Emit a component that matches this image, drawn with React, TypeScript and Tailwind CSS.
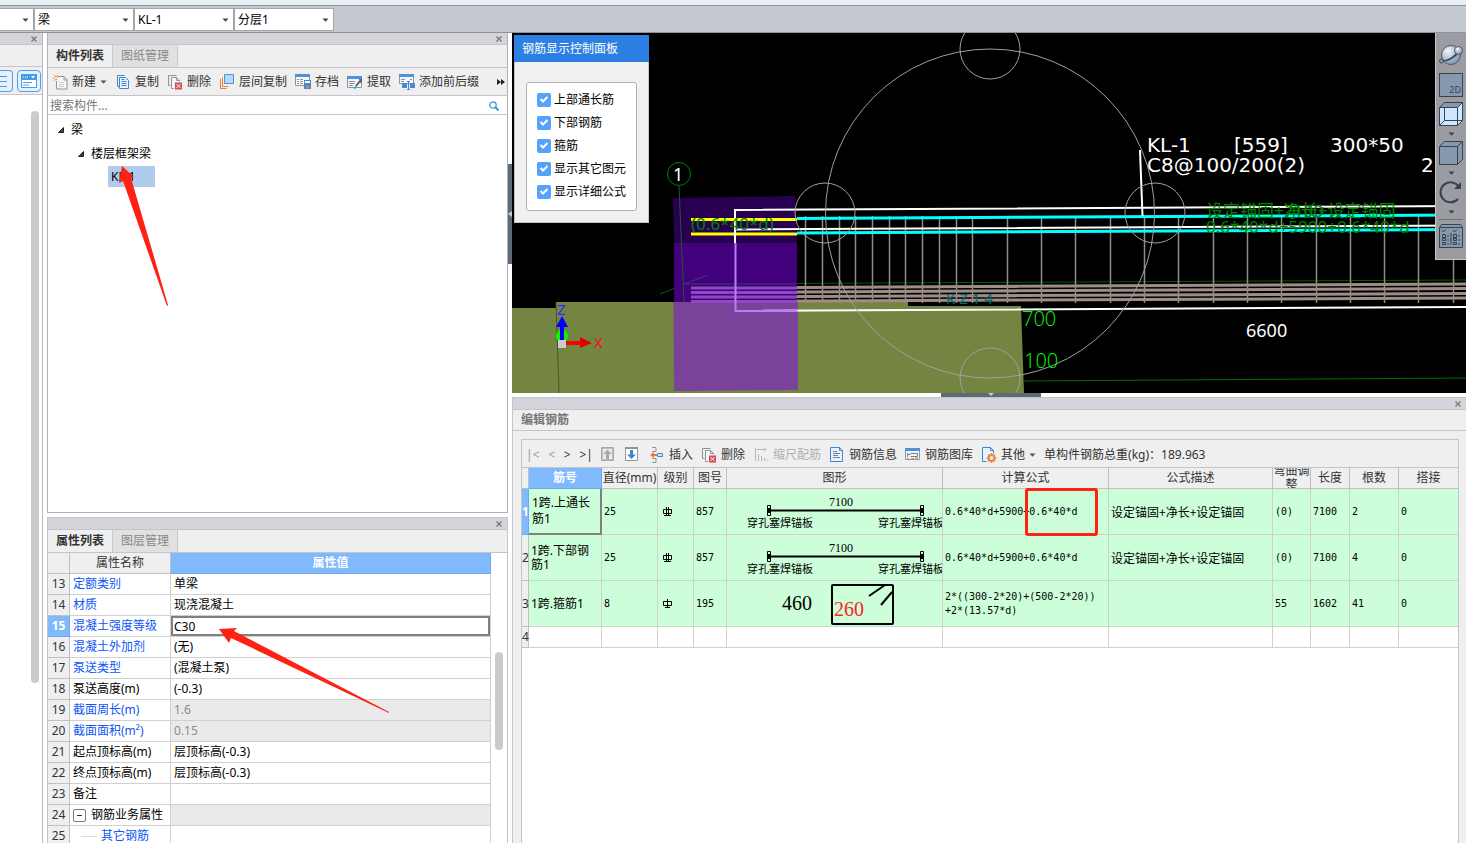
import type { ReactNode } from "react";

const sansFont = "font-['Noto_Sans','Noto_Sans_CJK_SC',sans-serif]";
const monoFont = "font-['DejaVu_Sans_Mono','Noto_Sans_CJK_SC',monospace]";

const filters = ["梁", "KL-1", "分层1"];

type PropertyRow = {
  no: number;
  name: string;
  value: string;
  link?: boolean;
  readOnly?: boolean;
  kind?: "group" | "child" | "active";
};

const properties: PropertyRow[] = [
  { no: 13, name: "定额类别", value: "单梁", link: true },
  { no: 14, name: "材质", value: "现浇混凝土", link: true },
  { no: 15, name: "混凝土强度等级", value: "C30", link: true, kind: "active" },
  { no: 16, name: "混凝土外加剂", value: "(无)", link: true },
  { no: 17, name: "泵送类型", value: "(混凝土泵)", link: true },
  { no: 18, name: "泵送高度(m)", value: "(-0.3)" },
  { no: 19, name: "截面周长(m)", value: "1.6", link: true, readOnly: true },
  { no: 20, name: "截面面积(m²)", value: "0.15", link: true, readOnly: true },
  { no: 21, name: "起点顶标高(m)", value: "层顶标高(-0.3)" },
  { no: 22, name: "终点顶标高(m)", value: "层顶标高(-0.3)" },
  { no: 23, name: "备注", value: "" },
  { no: 24, name: "钢筋业务属性", value: "", readOnly: true, kind: "group" },
  { no: 25, name: "其它钢筋", value: "", link: true, kind: "child" },
];

const displayOptions = ["上部通长筋", "下部钢筋", "箍筋", "显示其它图元", "显示详细公式"];

const rebarColumns = [
  { label: "直径(mm)", width: "w-[56px]" },
  { label: "级别", width: "w-[36px]" },
  { label: "图号", width: "w-[33px]" },
  { label: "图形", width: "w-[216px]" },
  { label: "计算公式", width: "w-[166px]" },
  { label: "公式描述", width: "w-[164px]" },
  { label: "弯曲调整", width: "w-[38px]" },
  { label: "长度", width: "w-[39px]" },
  { label: "根数", width: "w-[49px]" },
  { label: "搭接", width: "" },
];

const rebars = [
  {
    no: 1,
    name: "1跨.上通长筋1",
    diameter: "25",
    shapeNo: "857",
    formula: ["0.6*40*d+5900+0.6*40*d"],
    description: "设定锚固+净长+设定锚固",
    bend: "(0)",
    length: "7100",
    count: "2",
    lap: "0",
  },
  {
    no: 2,
    name: "1跨.下部钢筋1",
    diameter: "25",
    shapeNo: "857",
    formula: ["0.6*40*d+5900+0.6*40*d"],
    description: "设定锚固+净长+设定锚固",
    bend: "(0)",
    length: "7100",
    count: "4",
    lap: "0",
  },
  {
    no: 3,
    name: "1跨.箍筋1",
    diameter: "8",
    shapeNo: "195",
    formula: ["2*((300-2*20)+(500-2*20))", "+2*(13.57*d)"],
    description: "",
    bend: "55",
    length: "1602",
    count: "41",
    lap: "0",
  },
];

const stirrups = [
  805, 822, 839, 855, 872, 889, 905, 922, 939, 956, 972, 1007, 1041, 1075, 1110, 1144, 1178,
  1213, 1247, 1281, 1316, 1350, 1384, 1418, 1453,
];

function Icon({ children }: { children: ReactNode }) {
  return (
    <svg viewBox="0 0 16 16" className="w-4 h-4 shrink-0" fill="none" aria-hidden="true">
      {children}
    </svg>
  );
}

function Caret({ className = "" }: { className?: string }) {
  return (
    <svg viewBox="0 0 7 4" className={`w-[7px] h-1 shrink-0 ${className}`} aria-hidden="true">
      <path d="M0.5 0.5h6L3.5 3.7z" fill="currentColor" />
    </svg>
  );
}

const NewIcon = () => (
  <Icon>
    <path d="M6 2.500h6l3 3v9.500H4.500V7" fill="#f6f6f6" stroke="#8c969e" />
    <path d="M12 2.500v3.500h3" stroke="#8c969e" />
    <path d="M7 8.500h5M7 10.500h5M7 12.500h5" stroke="#c9cdd1" />
    <path d="M2 1.500h1M5 1.500h1M3 2.500h2M2 3.500h1M5 3.500h1M1 4.500h1M3 5.500h2M2 6.500h1" stroke="#e79b2e" />
  </Icon>
);

const CopyIcon = () => (
  <Icon>
    <path d="M4.500 12.500h-2v-11h7" stroke="#3f86d2" />
    <path d="M4.500 3.500h6l3 3v8h-9z" fill="#e9f3fd" stroke="#3f86d2" />
    <path d="M6.500 7.500h5M6.500 9.500h5M6.500 11.500h5M6.500 5.500h3" stroke="#3f86d2" />
  </Icon>
);

const DeleteIcon = () => (
  <Icon>
    <path d="M3.500 11.500h-2v-10h8" stroke="#8c969e" />
    <path d="M7 14.500H4.500v-11h5l3 3v1" fill="#f6f6f6" stroke="#8c969e" />
    <path d="M9.500 3.500v3h3" stroke="#8c969e" />
    <path d="M8 8.500h7v7H8z" fill="#d64b50" />
    <path d="M9.500 10l4 4M13.500 10l-4 4" stroke="#fff" />
  </Icon>
);

const LayerCopyIcon = () => (
  <Icon>
    <path d="M1.500 5v9.500h6M3.500 3.500v9h6" stroke="#ee8132" />
    <path d="M5.500 0.500h9v9h-9z" fill="#b8d8fb" stroke="#4d92dd" />
  </Icon>
);

const ArchiveIcon = () => (
  <Icon>
    <path d="M0.500 0.500h14v11H0.500z" fill="#f4f6f8" stroke="#8c969e" />
    <path d="M0 0h15v3H0z" fill="#4d92dd" />
    <path d="M2 5.500h2M5 5.500h3M2 7.500h2M5 7.500h3M2 9.500h2M5 9.500h3" stroke="#8c969e" />
    <path d="M9 6h7v9H9z" fill="#4888d5" />
    <path d="M10 7h5v2h-5z" fill="#fff" />
    <path d="M11 12h3v2h-3z" fill="#ee8132" />
  </Icon>
);

const ExtractIcon = () => (
  <Icon>
    <path d="M0.500 2.500h14v11H0.500z" fill="#f4f6f8" stroke="#8c969e" />
    <path d="M0 2h15v3H0z" fill="#4d92dd" />
    <path d="M2 7.500h6M2 9.500h6M2 11.500h4" stroke="#8c969e" />
    <path d="M9 12l4-5" stroke="#59636d" strokeWidth="2" />
    <path d="M12 5h3v3l-2 1z" fill="#59636d" />
    <path d="M7 14.500l2.500-2" stroke="#22b4c4" strokeWidth="2" />
  </Icon>
);

const PrefixIcon = () => (
  <Icon>
    <path d="M0.500 0.500h14v9H0.500z" fill="#f4f6f8" stroke="#8c969e" />
    <path d="M0 0h15v3H0z" fill="#4d92dd" />
    <path d="M2 5.500h4M2 7.500h3M11 5.500h2" stroke="#8c969e" />
    <path d="M3 9h5v5H3zM11 9h5v5h-5z" fill="#4888d5" />
    <path d="M8 7.500h3M9.500 7.500v8M8 15.500h3" stroke="#4888d5" />
  </Icon>
);

const InsertIcon = () => (
  <Icon>
    <path d="M3 0.500h4v4H3M3 15.500h4v-4H3" stroke="#8c969e" />
    <path d="M1 8l4-3v2h3v2H5v2z" fill="#f07a2c" />
    <path d="M8.500 6.500h5v3h-5z" fill="#cfe3f9" stroke="#4888d5" />
  </Icon>
);

const ScaleIcon = () => (
  <Icon>
    <path d="M2.500 1v13M4 2.500h9M11 0.500l2 2-2 2M5.500 7v7M8.500 9v5M11.500 11v3M14 12.500v1.500" stroke="#b4b7ba" />
  </Icon>
);

const InfoIcon = () => (
  <Icon>
    <path d="M1.500 0.500h9l3 3v11h-12z" fill="#e9f3fd" stroke="#3f86d2" />
    <path d="M10.500 0.500v3h3" stroke="#3f86d2" />
    <path d="M4 4.500h4M4 6.500h7M4 8.500h5M4 10.500h7" stroke="#76828d" />
  </Icon>
);

const LibraryIcon = () => (
  <Icon>
    <path d="M0.500 1.500h14v11H0.500z" fill="#f4f6f8" stroke="#8c969e" />
    <path d="M0 1h15v3H0z" fill="#4d92dd" />
    <path d="M2.500 6v4M2.500 7.500h3M5.500 6.500h7v3h-7M10 11h3" stroke="#76828d" />
    <path d="M2 11.500h2M6 11.500h3" stroke="#e79b2e" />
  </Icon>
);

const OtherIcon = () => (
  <Icon>
    <path d="M1.500 14.500v-14h8l3 3v3M1.500 14.500h4" fill="#e9f3fd" stroke="#3f86d2" />
    <path d="M9.500 0.500v3h3" stroke="#3f86d2" />
    <circle cx="10.500" cy="11" r="3" stroke="#ee8132" strokeWidth="2" />
    <path d="M10.500 6v2M10.500 14v2M5.500 11h2M13.500 11h2M7 7.500L8.500 9M12.500 13l1.500 1.500M14 7.500L12.500 9M7 14.500L8.500 13" stroke="#ee8132" />
  </Icon>
);

function CloseButton() {
  return (
    <button aria-label="关闭" className="w-2 h-2 shrink-0 text-[#777]">
      <svg viewBox="0 0 8 8" className="w-2 h-2" fill="none" stroke="currentColor">
        <path d="M1.500 1.500l5 5M6.500 1.500l-5 5" strokeWidth="1.300" />
      </svg>
    </button>
  );
}

function PanelTitle() {
  return (
    <div className="h-3 shrink-0 flex items-center justify-end pr-1 bg-[#d3d5db] border-b border-[#c3c5cb]">
      <CloseButton />
    </div>
  );
}

function Tabs({ active, other }: { active: string; other: string }) {
  return (
    <div role="tablist" className="h-[23px] shrink-0 flex bg-[#efefef] border-b border-[#c3c5cb]">
      <button role="tab" aria-selected="true" className="w-[65px] font-bold text-[#333] border-r border-[#c9cbd0]">
        {active}
      </button>
      <button role="tab" aria-selected="false" className="w-[65px] bg-[#e1e1e1] text-[#888] border-r border-[#c9cbd0]">
        {other}
      </button>
    </div>
  );
}

function Tool({
  icon,
  label,
  caret,
  disabled,
}: {
  icon: ReactNode;
  label: string;
  caret?: boolean;
  disabled?: boolean;
}) {
  return (
    <button disabled={disabled} className="flex items-center gap-1 shrink-0 whitespace-nowrap text-[#333] disabled:text-[#b0b0b0]">
      {icon}
      <span>{label}</span>
      {caret && <Caret className="text-[#555]" />}
    </button>
  );
}

function FilterBar() {
  return (
    <div className="shrink-0 border-t border-b border-[#8e9199] bg-[#c5c9d0] h-[28px] flex items-center">
      <div className="relative">
        <select aria-label="楼层" className="block appearance-none w-[34px] h-[23px] bg-white border border-l-0 border-[#a6a6a6]" />
        <Caret className="absolute right-[5px] top-[10px] text-[#444] pointer-events-none" />
      </div>
      {filters.map((item) => (
        <div key={item} className="relative">
          <select aria-label={item} className="block appearance-none w-[100px] h-[23px] pt-[2px] pl-[3px] bg-white border border-[#a6a6a6] text-black">
            <option>{item}</option>
          </select>
          <Caret className="absolute right-[5px] top-[10px] text-[#444] pointer-events-none" />
        </div>
      ))}
    </div>
  );
}

function NavigationSide() {
  return (
    <aside className="w-[43px] shrink-0 flex flex-col bg-white border-r border-[#b9bbc0]">
      <PanelTitle />
      <div className="h-[22px] shrink-0 bg-[#efefef] border-b border-[#c3c5cb]" />
      <div className="h-7 shrink-0 flex items-center gap-1 bg-[#efefef] border-b border-[#c3c5cb]">
        <button aria-label="列表视图" className="w-[13px] h-[22px] rounded-r border border-l-0 border-[#4ba0ee] bg-[#e6f1fc]">
          <svg viewBox="0 0 12 20" className="w-3 h-5" stroke="#4b9ae8">
            <path d="M0 5.500h7M0 10.500h7M0 15.500h7" />
          </svg>
        </button>
        <button aria-label="卡片视图" className="w-6 h-[22px] rounded border border-[#4ba0ee] bg-[#e6f1fc] flex items-center justify-center">
          <svg viewBox="0 0 16 14" className="w-4 h-[14px]" fill="none">
            <path d="M0.500 0.500h15v13H0.500z" fill="#fff" stroke="#4b9ae8" />
            <path d="M0 0h16v6H0z" fill="#4b9ae8" />
            <path d="M2 3h1M4 3h1M6 3h1" stroke="#fff" />
            <path d="M10 2h4l-2 2.500z" fill="#fff" />
            <path d="M2 8.500h9M2 11h6" stroke="#4b9ae8" />
          </svg>
        </button>
      </div>
      <div className="flex-1 flex justify-end pt-4 pr-[3px]">
        <div className="w-2 h-[572px] rounded bg-[#cbcbcb]" />
      </div>
    </aside>
  );
}

const TreeMark = () => (
  <svg viewBox="0 0 6 6" className="w-[6px] h-[6px] shrink-0" aria-hidden="true">
    <path d="M5.500 0.500v5h-5z" fill="#444" stroke="#222" />
  </svg>
);

function ComponentPanel() {
  return (
    <section className="h-[480px] shrink-0 flex flex-col bg-white border-x border-b border-[#b0b2b7]">
      <PanelTitle />
      <Tabs active="构件列表" other="图纸管理" />
      <div className="h-7 shrink-0 flex items-center gap-2 pt-px pl-1 pr-[2px] bg-[#efefef] border-b border-[#c3c5cb]">
        <Tool icon={<NewIcon />} label="新建" caret />
        <Tool icon={<CopyIcon />} label="复制" />
        <Tool icon={<DeleteIcon />} label="删除" />
        <Tool icon={<LayerCopyIcon />} label="层间复制" />
        <Tool icon={<ArchiveIcon />} label="存档" />
        <Tool icon={<ExtractIcon />} label="提取" />
        <Tool icon={<PrefixIcon />} label="添加前后缀" />
        <button aria-label="更多" className="ml-auto">
          <svg viewBox="0 0 8 6" className="w-2 h-[6px]" fill="#222">
            <path d="M0 0l4 3-4 3zM4 0l4 3-4 3z" />
          </svg>
        </button>
      </div>
      <div className="h-[19px] shrink-0 flex items-center pt-px pl-[2px] pr-2 border-b border-[#c3c5cb]">
        <input aria-label="搜索构件" placeholder="搜索构件..." className="flex-1 min-w-0 outline-none placeholder:text-[#777]" />
        <svg viewBox="0 0 10 10" className="w-[10px] h-[10px]" fill="none" stroke="#3c9ccc">
          <circle cx="4" cy="4" r="3.200" strokeWidth="1.300" />
          <path d="M6.500 6.500l3 3" strokeWidth="2" />
        </svg>
      </div>
      <ul className="pt-[3px] leading-6 text-black">
        <li>
          <div className="flex items-center gap-[7px] pl-[10px]">
            <TreeMark />梁
          </div>
          <ul>
            <li>
              <div className="flex items-center gap-[7px] pl-[30px]">
                <TreeMark />楼层框架梁
              </div>
              <ul>
                <li className="h-6 flex items-start pl-[60px]">
                  <span className="w-[47px] h-[21px] leading-[21px] pl-[3px] bg-[#b1cbec]">KL-1</span>
                </li>
              </ul>
            </li>
          </ul>
        </li>
      </ul>
    </section>
  );
}

function PropertyName({ row }: { row: PropertyRow }) {
  if (row.kind === "group") {
    return (
      <span className="flex items-center gap-[5px]">
        <button aria-label="收起" className="w-[13px] h-[13px] rounded-[2px] border border-[#777] bg-white flex items-center justify-center">
          <span className="w-[5px] h-px bg-[#333]" />
        </button>
        {row.name}
      </span>
    );
  }
  if (row.kind === "child") {
    return (
      <span className="flex items-center gap-1 pl-2">
        <span className="w-4 h-px bg-[#ddd]" />
        <span className="text-[#0e56f5]">{row.name}</span>
      </span>
    );
  }
  return <span className={row.link ? "text-[#0e56f5]" : "text-black"}>{row.name}</span>;
}

function PropertyPanel() {
  return (
    <section className="flex-1 min-h-0 flex flex-col overflow-hidden bg-white border-t border-x border-[#c3c5cb]">
      <PanelTitle />
      <Tabs active="属性列表" other="图层管理" />
      <div className="flex-1 min-h-0 flex overflow-hidden">
        <div className="flex-1 min-w-0">
          <table className="w-full table-fixed border-separate border-spacing-0">
            <thead>
              <tr className="h-[21px]">
                <th className="w-[22px] p-0 bg-[#efefef] border-r border-b border-[#c0c0c0]" />
                <th className="w-[101px] p-0 bg-[#efefef] border-r border-b border-[#c0c0c0] font-normal text-[#333]">属性名称</th>
                <th className="p-0 bg-[#80b9fc] border-r border-b border-[#6aa9ee] font-bold text-white">属性值</th>
              </tr>
            </thead>
            <tbody>
              {properties.map((row) => (
                <tr key={row.no} className="h-[21px] leading-[18px]">
                  <th
                    className={`p-0 border-r border-b text-center ${
                      row.kind === "active"
                        ? "bg-[#80b9fc] border-[#6aa9ee] font-bold text-white"
                        : "bg-[#efefef] border-[#c0c0c0] font-normal text-[#333]"
                    }`}
                  >
                    {row.no}
                  </th>
                  <td className="p-0 pl-[3px] border-r border-b border-[#d0d0d0] whitespace-nowrap">
                    <PropertyName row={row} />
                  </td>
                  <td className={`p-0 border-r border-b border-[#d0d0d0] ${row.readOnly ? "bg-[#eaeaea] text-[#8a8a8a]" : "text-black"}`}>
                    {row.kind === "active" ? (
                      <input
                        aria-label={row.name}
                        defaultValue={row.value}
                        className="block w-full h-5 pl-px border-2 border-[#808080] outline-none"
                      />
                    ) : (
                      <span className="pl-[3px]">{row.value}</span>
                    )}
                  </td>
                </tr>
              ))}
            </tbody>
          </table>
        </div>
        <div className="w-4 flex justify-center pt-[99px]">
          <div className="w-2 h-[98px] rounded bg-[#cbcbcb]" />
        </div>
      </div>
    </section>
  );
}

function BeamScene() {
  return (
    <svg
      viewBox="512 33 954 360"
      preserveAspectRatio="xMidYMid slice"
      className={`block w-full h-full ${sansFont}`}
      fill="none"
      role="img"
      aria-label="KL-1 钢筋三维"
    >
      <path d="M512 308h44v-6h352v4h113l3 87H512z" fill="#748541" />
      <path d="M556 302l3 91" stroke="#4a5528" />
      <path d="M685 284L1466 280" stroke="#005c00" />
      <path d="M1024 381L1466 378" stroke="#006e00" />
      <path d="M660 294L708 275" stroke="#00640a" />
      <path d="M691 288L1466 284M691 292.500L1466 288.500M691 297L1466 293.500M691 301.500L1466 298" stroke="#9e8c86" strokeWidth="3" />
      {stirrups.map((x) => (
        <path key={x} d={`M${x + 0.5} 216V303`} stroke="#9a8982" strokeWidth="1.500" />
      ))}
      <path d="M673 198l122-2 2 47H674z" fill="#280050" />
      <path d="M674 243h123v59H674z" fill="#43007c" />
      <path d="M673.500 302H798v88l-124 1z" fill="#7b429a" />
      <path d="M691 288h106M691 292.500h106M691 297h106M691 301.500h106" stroke="#9048c4" strokeWidth="3" />
      <path d="M679 186l5 116" stroke="#25523a" />
      <path d="M684 284l24-9M684 284h112" stroke="#3a3f72" />
      <path d="M691 219.500h106M691 234h106" stroke="#ff0" strokeWidth="3" />
      <path d="M797 218.500L1466 215M797 233L1466 229.500" stroke="#0ff" strokeWidth="3" />
      <path d="M735 210L1466 206M735 229.500L1466 225.500M735 311L1466 307M735 209v34" stroke="#fff" strokeWidth="2" />
      <path d="M735.500 243v68h62" stroke="#b87cff" strokeWidth="2" />
      <path d="M1140 150l2.500 66" stroke="#fff" strokeWidth="2" />
      <g stroke="#a0a0a0">
        <circle cx="990" cy="213.500" r="164.500" />
        <circle cx="990" cy="49" r="30" />
        <circle cx="825" cy="213" r="30" />
        <circle cx="1155" cy="213" r="30" />
        <circle cx="990" cy="378" r="30" />
      </g>
      <circle cx="679" cy="174" r="11.500" stroke="#008000" />
      <text x="673" y="181" fontSize="18" fill="#fff">1</text>
      <g fill="#008000" fontSize="17">
        <text x="691" y="230">(0.6*40*d)</text>
        <text x="1206" y="217">设定锚固+净长+设定锚固</text>
        <text x="1284" y="217">7100</text>
        <text x="1206" y="233">0.6*40*d+5900+0.6*40*d</text>
      </g>
      <text x="946" y="304" fontSize="15" fill="#006a6a">K Z 1 4</text>
      <g fill="#0f0" fontSize="20" className="font-['Open_Sans',sans-serif] font-light">
        <text x="1022" y="326">700</text>
        <text x="1024" y="368">100</text>
      </g>
      <g fill="#fff" fontSize="20" className="font-['DejaVu_Sans',sans-serif]">
        <text x="1147" y="152">KL-1</text>
        <text x="1234" y="152">[559]</text>
        <text x="1330" y="152">300*50</text>
        <text x="1147" y="172">C8@100/200(2)</text>
        <text x="1421" y="172">2</text>
      </g>
      <text x="1246" y="337" fontSize="18" fill="#fff">6600</text>
      <circle cx="562" cy="336" r="6" fill="#0f0" />
      <path d="M562 342v-16" stroke="#00f" strokeWidth="4" />
      <path d="M562 316l6 11h-12z" fill="#00f" />
      <path d="M566 343h15" stroke="#f00" strokeWidth="4" />
      <path d="M580 337l12 6-12 5z" fill="#e00000" />
      <path d="M558 340h8v8h-8z" fill="#ccc" />
      <text x="557" y="315" fontSize="15" fill="#2030ff">Z</text>
      <text x="594" y="348" fontSize="15" fill="#ff1010">X</text>
    </svg>
  );
}

function DisplayPanel() {
  return (
    <div className="absolute left-[2px] top-[2px] w-[135px] bg-[#f0f0f0] border border-t-0 border-[#c3c5cb]">
      <h2 className="-mx-px h-[27px] leading-[27px] pl-2 bg-[#2d7fe3] text-white">钢筋显示控制面板</h2>
      <div className="mx-[11px] mt-5 mb-[11px] pl-[10px] pt-[5px] pb-[7px] bg-white border border-[#b0b0b0] rounded-[3px]">
        {displayOptions.map((option) => (
          <label key={option} className="relative h-[23px] flex items-center gap-[3px] text-black">
            <input type="checkbox" defaultChecked className="appearance-none w-[14px] h-[14px] rounded-[2px] bg-[#55a2fb]" />
            <svg viewBox="0 0 14 14" className="absolute left-0 top-1 w-[14px] h-[14px] pointer-events-none" fill="none">
              <path d="M3.500 7l2.500 2.500L10.500 5" stroke="#fff" strokeWidth="2" />
            </svg>
            {option}
          </label>
        ))}
      </div>
    </div>
  );
}

function ViewToolbar() {
  return (
    <div className="absolute right-0 top-0 w-[31px] h-[227px] pt-[10px] flex flex-col items-center bg-[#9b9ca1] border-l border-b border-[#c5c6ca] text-[#36434f]">
      <button aria-label="动态观察" className="h-6">
        <svg viewBox="0 0 24 24" className="w-6 h-6" fill="none">
          <defs>
            <radialGradient id="globe" cx="0.350" cy="0.300" r="0.800">
              <stop offset="0" stopColor="#f4f8fc" />
              <stop offset="1" stopColor="#7189a4" />
            </radialGradient>
          </defs>
          <circle cx="12" cy="12" r="9.500" fill="url(#globe)" stroke="#4a5a6a" />
          <path d="M2 18C9 19 17 13 20 8" stroke="#36434f" strokeWidth="1.500" />
          <circle cx="19.500" cy="7.500" r="4" fill="url(#globe)" stroke="#4a5a6a" />
          <circle cx="2.500" cy="18" r="2" fill="#9b9ca1" stroke="#36434f" />
        </svg>
      </button>
      <button aria-label="二维" className="mt-[6px] w-6 h-6 shrink-0 border border-[#36434f] bg-[#8698ad] flex items-end justify-end pr-px text-[9px] leading-[12px]">
        2D
      </button>
      <button aria-label="线框" className="mt-[5px] h-6">
        <svg viewBox="0 0 24 24" className="w-6 h-6" fill="#cfe6ff" stroke="#36434f">
          <path d="M0.500 5.500l5-5h18v18l-5 5h-18z" />
          <path d="M0.500 5.500l5-5h18l-5 5z" fill="#8698ad" />
          <path d="M18.500 5.500v18M5.500 5.500v13h18M0.500 23.500l5-5" fill="none" />
        </svg>
      </button>
      <Caret className="mt-[6px]" />
      <button aria-label="实体" className="mt-[5px] h-6">
        <svg viewBox="0 0 24 24" className="w-6 h-6" fill="#8698ad" stroke="#36434f">
          <path d="M0.500 5.500l5-5h18v18l-5 5h-18z" />
          <path d="M0.500 5.500h18l5-5M18.500 5.500v18" fill="none" />
        </svg>
      </button>
      <Caret className="mt-[6px]" />
      <button aria-label="旋转" className="mt-[5px] h-6">
        <svg viewBox="0 0 24 24" className="w-6 h-6" fill="none" stroke="#36434f" strokeWidth="2">
          <path d="M20 7A10 10 0 1 0 19 19" />
          <path d="M22 2v7h-7z" fill="#36434f" stroke="none" />
        </svg>
      </button>
      <Caret className="mt-[6px]" />
      <hr className="mt-[5px] mb-1 w-6 border-[#6d6f75]" />
      <button aria-label="显示设置" className="h-6">
        <svg viewBox="0 0 24 24" className="w-6 h-6" fill="none" stroke="#36434f">
          <path d="M0.500 3.500l2-3h19l2 3v20h-23z" fill="#8698ad" />
          <path d="M0.500 3.500h23M12 9v12" />
          <path d="M3 6l1.500 2L7 5.500M14 6l1.500 2L18 5.500" />
          <path d="M3.500 10.500h3v3h-3zM3.500 14.500h3v2h-3zM3.500 18.500h3v2h-3zM14.500 10.500h3v3h-3zM14.500 14.500h3v2h-3zM14.500 18.500h3v2h-3z" />
          <path d="M8 12h2M8 16h2M8 20h2M19 12h2M19 16h2M19 20h2" />
        </svg>
      </button>
    </div>
  );
}

function AnchorShape() {
  return (
    <svg viewBox="0 0 215 45" className="block w-[215px] h-[45px]" fill="none">
      <path d="M42 21.500h153" stroke="#000" strokeWidth="2" />
      <path d="M40.500 16.500h3v10h-3zM193.500 16.500h3v10h-3z" stroke="#000" />
      <path d="M42 19v5M195 19v5" stroke="#000" strokeWidth="2" />
      <text x="102" y="17" fontSize="12" fill="#000" className="font-['Liberation_Serif',serif]">7100</text>
      <g fill="#000" fontSize="11">
        <text x="20" y="38">穿孔塞焊锚板</text>
        <text x="151" y="38">穿孔塞焊锚板</text>
      </g>
    </svg>
  );
}

function StirrupShape() {
  return (
    <svg viewBox="0 0 215 45" className="block w-[215px] h-[45px] font-['Liberation_Serif',serif]" fill="none">
      <rect x="105" y="4" width="61" height="39" rx="1" stroke="#000" strokeWidth="2" />
      <path d="M142 15l16-11M154 24l11-13" stroke="#000" strokeWidth="2" />
      <text x="55" y="29" fontSize="20" fill="#000">460</text>
      <text x="107" y="35" fontSize="20" fill="#f22">260</text>
    </svg>
  );
}

function GradeMark({ ribbed }: { ribbed: boolean }) {
  return (
    <svg viewBox="0 0 9 9" className="block w-[9px] h-[9px] ml-[3px]" fill="none" stroke="#000">
      <path d="M0.500 2.500h8v4h-8z" />
      <path d={ribbed ? "M3.500 0v9M5.500 0v9M1 8.500h7" : "M4.500 0v9M2 8.500h5"} />
    </svg>
  );
}

const cell = "p-0 pl-[2px] border-r border-b border-[#d0d0d0] text-left last:border-r-0";

function RebarTable() {
  return (
    <table className="w-full table-fixed border-separate border-spacing-0 text-black">
      <thead>
        <tr className="text-[#333]">
          <th className="w-[7px] p-0 bg-[#efefef] border-r border-b border-[#c0c0c0]" />
          <th className="w-[73px] p-0 bg-[#80b9fc] border-r border-b border-[#6aa9ee] font-bold text-white">筋号</th>
          {rebarColumns.map((col) => (
            <th key={col.label} className={`p-0 bg-[#efefef] border-r border-b border-[#c0c0c0] last:border-r-0 font-normal ${col.width}`}>
              <div className="h-5 flex items-center justify-center overflow-hidden leading-[14px]">{col.label}</div>
            </th>
          ))}
        </tr>
      </thead>
      <tbody>
        {rebars.map((row) => (
          <tr key={row.no} className={`h-[46px] bg-[#ccffd9] text-[10px] leading-[14px] ${monoFont}`}>
            <th
              className={`p-0 border-r border-b text-[12px] ${sansFont} ${
                row.no === 1
                  ? "bg-[#80b9fc] border-[#6aa9ee] font-bold text-white"
                  : "bg-[#efefef] border-[#c0c0c0] font-normal text-[#333]"
              }`}
            >
              {row.no}
            </th>
            <td
              className={`text-[12px] ${sansFont} ${
                row.no === 1
                  ? "p-0 pl-[3px] leading-4 border-r-2 border-b-2 border-[#808080]"
                  : cell
              }`}
            >
              {row.name}
            </td>
            <td className={cell}>{row.diameter}</td>
            <td className={cell}>
              <GradeMark ribbed={row.no < 3} />
            </td>
            <td className={cell}>{row.shapeNo}</td>
            <td className={`p-0 overflow-hidden border-r border-b border-[#d0d0d0] ${sansFont}`}>
              {row.no === 3 ? <StirrupShape /> : <AnchorShape />}
            </td>
            <td className={`relative ${cell}`}>
              {row.formula.map((line) => (
                <div key={line} className="whitespace-nowrap">{line}</div>
              ))}
              {row.no === 1 && (
                <div className="absolute left-[82px] -top-px w-[73px] h-12 border-[3px] border-[#ff2113] rounded-[3px] pointer-events-none" />
              )}
            </td>
            <td className={`text-[12px] font-['Noto_Sans_CJK_SC',sans-serif] ${cell}`}>{row.description}</td>
            <td className={cell}>{row.bend}</td>
            <td className={cell}>{row.length}</td>
            <td className={cell}>{row.count}</td>
            <td className={cell}>{row.lap}</td>
          </tr>
        ))}
        <tr className="h-[21px]">
          <th className="p-0 bg-[#efefef] border-r border-b border-[#c0c0c0] font-normal text-[#333]">4</th>
          <td className={cell} />
          {rebarColumns.map((col) => (
            <td key={col.label} className={cell} />
          ))}
        </tr>
      </tbody>
    </table>
  );
}

function RebarToolbar() {
  return (
    <div className="h-7 shrink-0 flex items-center gap-2 pt-[2px] pl-1 bg-[#efefef] border-b border-[#c3c5cb] whitespace-nowrap overflow-hidden">
      <div className="w-[67px] shrink-0 flex items-center justify-between text-[#333]">
        <button className="text-[#999]">|&lt;</button>
        <button className="text-[#999]">&lt;</button>
        <button>&gt;</button>
        <button>&gt;|</button>
      </div>
      <button aria-label="上移" className="w-4">
        <Icon>
          <path d="M0.500 0.500h12v13H0.500z" fill="#bbb" stroke="#aaa" />
          <path d="M2 2h9v10H2z" fill="#eee" />
          <path d="M6.500 2.500L11 7H8v5H5V7H2z" fill="#aaa" />
        </Icon>
      </button>
      <button aria-label="下移" className="w-4">
        <Icon>
          <path d="M0.500 0.500h12v13H0.500z" fill="#fff" stroke="#8c969e" />
          <path d="M0 0h13v2H0z" fill="#8c969e" />
          <path d="M6.500 12L2 7.500h3V3h3v4.500h3z" fill="#3f86d2" />
        </Icon>
      </button>
      <Tool icon={<InsertIcon />} label="插入" />
      <Tool icon={<DeleteIcon />} label="删除" />
      <Tool icon={<ScaleIcon />} label="缩尺配筋" disabled />
      <Tool icon={<InfoIcon />} label="钢筋信息" />
      <Tool icon={<LibraryIcon />} label="钢筋图库" />
      <Tool icon={<OtherIcon />} label="其他" caret />
      <span className="text-[#333]">单构件钢筋总重(kg)：189.963</span>
    </div>
  );
}

function RebarEditor() {
  return (
    <section className="flex-1 min-h-0 flex flex-col bg-[#efefef] border-t border-l border-[#c3c5cb]">
      <PanelTitle />
      <h2 className="h-[21px] leading-[20px] shrink-0 pl-2 font-bold text-[#777] border-b border-[#c3c5cb]">编辑钢筋</h2>
      <div className="flex-1 min-h-0 mt-2 ml-2 mr-[7px] flex flex-col overflow-hidden bg-white border-t border-x border-[#c3c5cb]">
        <RebarToolbar />
        <RebarTable />
      </div>
    </section>
  );
}

function Callouts() {
  return (
    <svg viewBox="0 0 400 720" className="absolute left-0 top-0 w-[400px] h-[720px] pointer-events-none" fill="#ff2113" aria-hidden="true">
      <path d="M122 166L134 177L131 178L168 305L167 306L123 181L119 183Z" />
      <path d="M219 629L237 628L234 631L389 712L389 713L231 638L229 643Z" />
    </svg>
  );
}

export default function App() {
  return (
    <div className={`relative h-screen flex flex-col overflow-hidden bg-white text-[12px] leading-4 ${sansFont}`}>
      <div className="h-[5px] shrink-0 bg-[#e8eff0]" />
      <FilterBar />
      <main className="flex-1 min-h-0 flex">
        <NavigationSide />
        <div className="w-[461px] ml-1 shrink-0 flex flex-col gap-1">
          <ComponentPanel />
          <PropertyPanel />
        </div>
        <div className="w-1 shrink-0 pt-[131px]">
          <div className="h-[100px] flex items-center bg-[#5f6a77]">
            <svg viewBox="0 0 4 6" className="w-1 h-[6px]" fill="#ccc">
              <path d="M4 0v6L0 3z" />
            </svg>
          </div>
        </div>
        <div className="flex-1 min-w-0 flex flex-col">
          <div className="relative h-[360px] shrink-0 bg-black overflow-hidden">
            <BeamScene />
            <DisplayPanel />
            <ViewToolbar />
          </div>
          <div className="h-1 shrink-0 flex justify-center pl-1">
            <div className="w-[100px] flex justify-center bg-[#5f6a77]">
              <svg viewBox="0 0 6 3" className="w-[6px] h-[3px]" fill="#ccc">
                <path d="M0 0h6L3 3z" />
              </svg>
            </div>
          </div>
          <RebarEditor />
        </div>
      </main>
      <Callouts />
    </div>
  );
}
